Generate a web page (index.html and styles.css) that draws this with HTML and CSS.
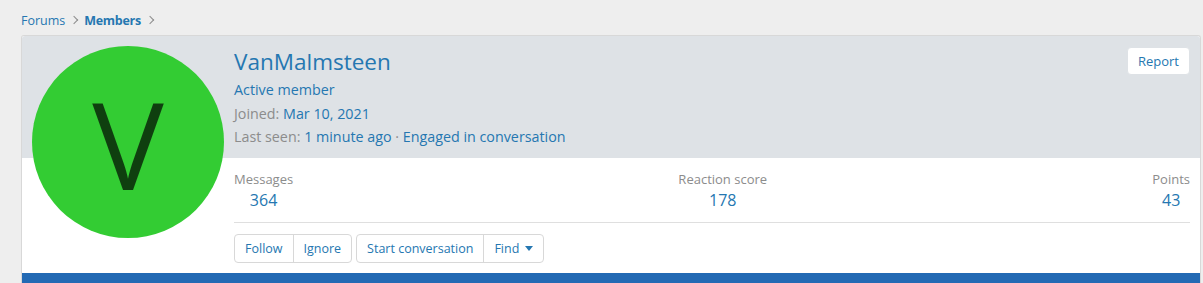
FILE: index.html
```html
<!DOCTYPE html>
<html lang="en">
<head>
<meta charset="UTF-8" />
<title>VanMalmsteen | Members</title>
<link rel="stylesheet" href="styles.css">
</head>
<body>
<div class="page">
  <ul class="breadcrumbs">
    <li><a href="#">Forums</a></li>
    <li class="current"><a href="#">Members</a></li>
  </ul>
  <div class="member-card">
    <div class="member-header-bg"></div>
    <div class="avatar"><span>V</span></div>
    <div class="member-main">
      <div class="member-blurb">
        <h1 class="member-name">VanMalmsteen</h1>
        <div class="member-title">Active member</div>
        <div class="member-line">Joined: <a href="#">Mar 10, 2021</a></div>
        <div class="member-line">Last seen: <a href="#">1 minute ago</a> &middot; <a href="#">Engaged in conversation</a></div>
      </div>
      <button class="report-btn">Report</button>
    </div>
    <div class="member-content">
      <div class="member-stats">
        <dl class="stat">
          <dt>Messages</dt>
          <dd><a href="#">364</a></dd>
        </dl>
        <dl class="stat">
          <dt>Reaction score</dt>
          <dd><a href="#">178</a></dd>
        </dl>
        <dl class="stat">
          <dt>Points</dt>
          <dd><a href="#">43</a></dd>
        </dl>
      </div>
      <div class="member-buttons">
        <div class="btn-group">
          <a href="#" class="btn">Follow</a>
          <a href="#" class="btn">Ignore</a>
        </div>
        <div class="btn-group">
          <a href="#" class="btn">Start conversation</a>
          <a href="#" class="btn">Find <span class="caret"></span></a>
        </div>
      </div>
    </div>
    <div class="member-tabs"></div>
  </div>
</div>
</body>
</html>
```

FILE: styles.css
```css
* { box-sizing: border-box; }
body {
  margin: 0;
  background: #eeeeee;
  font-family: 'Open Sans', sans-serif;
  color: #141414;
}
a {
  color: #2577b1;
  text-decoration: none;
}
.page {
  padding: 10px 2px 0 21px;
}
/* Breadcrumbs */
.breadcrumbs {
  list-style: none;
  margin: 0 0 5px;
  padding: 0;
  display: flex;
  height: 20px;
  align-items: center;
  font-size: 12.5px;
}
.breadcrumbs li {
  display: flex;
  align-items: center;
}
.breadcrumbs li::after {
  content: "";
  width: 5px;
  height: 5px;
  border-right: 1.3px solid #8c8c8c;
  border-top: 1.3px solid #8c8c8c;
  transform: rotate(45deg);
  margin: 0 7px 0 6px;
}
.breadcrumbs .current a {
  font-weight: 700;
  letter-spacing: -0.3px;
}
/* Member card */
.member-card {
  display: grid;
  grid-template-columns: 212px 1fr;
  grid-template-rows: 122px auto auto;
  background: #fff;
  border: 1px solid #d8d8d8;
  border-bottom: none;
  border-radius: 3px 3px 0 0;
}
.member-header-bg {
  grid-column: 1 / -1;
  grid-row: 1;
  background: #dee2e6;
  border-radius: 3px 3px 0 0;
}
.avatar {
  grid-column: 1;
  grid-row: 1 / 3;
  width: 192px;
  height: 192px;
  margin: 10px;
  border-radius: 50%;
  background: #33cc33;
  color: #0f3f0f;
  display: flex;
  align-items: center;
  justify-content: center;
  font-size: 120px;
  line-height: 1;
  z-index: 1;
}
.avatar span {
  margin-top: 4px;
}
.member-main {
  grid-column: 2;
  grid-row: 1;
  display: flex;
  justify-content: space-between;
  align-items: flex-start;
  padding: 11px 10px 10px 0;
}
.member-name {
  margin: 0 0 1px;
  font-size: 22.5px;
  font-weight: 400;
  line-height: 30px;
  color: #2577b1;
}
.member-title,
.member-line {
  font-size: 14.3px;
  line-height: 23.5px;
  color: #8c8c8c;
}
.member-title {
  color: #2577b1;
}
.report-btn {
  font: inherit;
  font-size: 13px;
  color: #2577b1;
  background: #fff;
  border: 1px solid #dee2e6;
  border-radius: 4px;
  padding: 0 10px;
  height: 28px;
  cursor: pointer;
}
/* Stats + buttons */
.member-content {
  grid-column: 2;
  grid-row: 2;
  padding: 12px 10px 10px 0;
}
.member-stats {
  display: flex;
  justify-content: space-between;
  padding-bottom: 10px;
  border-bottom: 1px solid #dfdfdf;
}
.stat {
  margin: 0;
  text-align: center;
}
.stat dt {
  font-size: 13px;
  line-height: 18px;
  color: #8c8c8c;
}
.stat dd {
  margin: 0;
  font-size: 16px;
  line-height: 24px;
}
.member-buttons {
  display: flex;
  gap: 4px;
  margin-top: 11px;
}
.btn-group {
  display: flex;
  border: 1px solid #d8d8d8;
  border-radius: 4px;
  background: #fff;
}
.btn {
  display: flex;
  align-items: center;
  gap: 6px;
  height: 27px;
  padding: 0 10px;
  font-size: 12.5px;
}
.btn + .btn {
  border-left: 1px solid #d8d8d8;
}
.caret {
  width: 0;
  height: 0;
  border-left: 4px solid transparent;
  border-right: 4px solid transparent;
  border-top: 5px solid #2577b1;
}
/* Tabs */
.member-tabs {
  grid-column: 1 / -1;
  grid-row: 3;
  height: 40px;
  background: #236ab4;
}
```
